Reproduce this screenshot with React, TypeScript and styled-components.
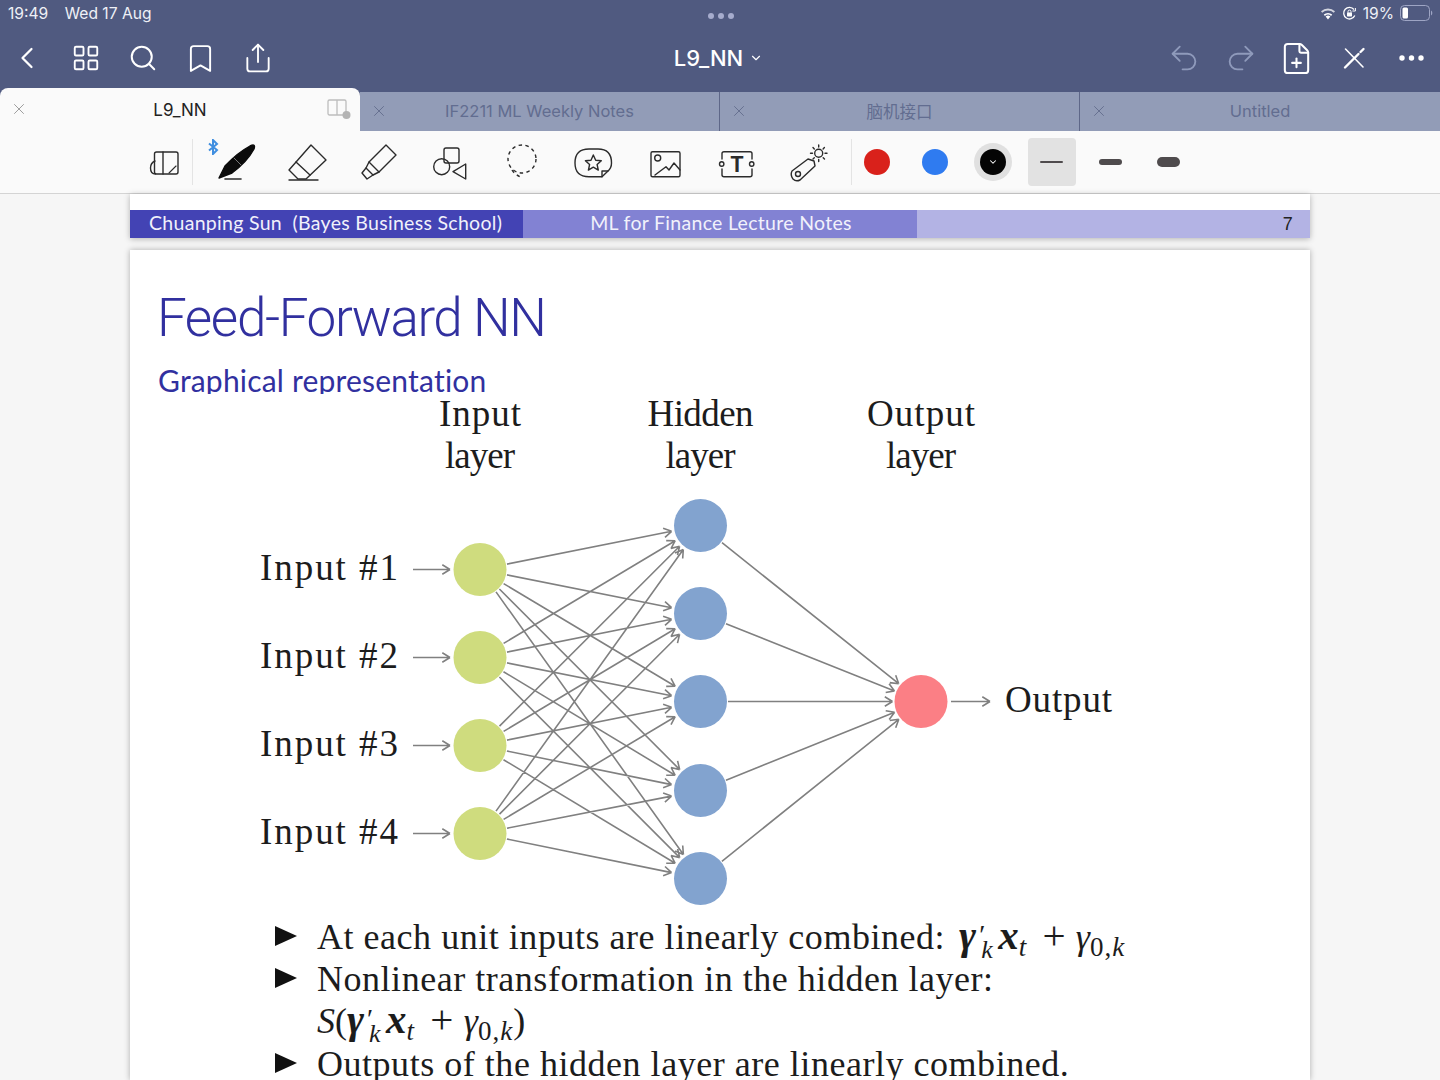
import { FC, ReactNode } from "react";
import styled, { createGlobalStyle } from "styled-components";
import {
  Bookmark,
  ChevronDown,
  ChevronLeft,
  FilePlus,
  LayoutGrid,
  Redo2,
  Search,
  Share,
  Undo2,
  X,
} from "lucide-react";

const GlobalStyle = createGlobalStyle`
  html, body {
    margin: 0;
    padding: 0;
    background: #f6f6f6;
  }
`;

const UI_FONT = `Inter, "Noto Sans CJK SC", "Liberation Sans", sans-serif`;
const SLIDE_SANS = `Lato, "Open Sans", sans-serif`;
const SLIDE_SERIF = `"Liberation Serif", serif`;

const Screen = styled.div`
  width: 1440px;
  height: 1080px;
  display: flex;
  flex-direction: column;
  overflow: hidden;
  font-family: ${UI_FONT};
`;

const Header = styled.header`
  background: #505a80;
  color: #fff;
`;

const StatusBar = styled.div`
  height: 28px;
  display: grid;
  grid-template-columns: 1fr auto 1fr;
  align-items: center;
  padding: 0 7px 2px 8px;
  box-sizing: border-box;
  font-size: 15.6px;
  color: #eef0f6;
`;

const StatusLeft = styled.div`
  display: flex;
  gap: 16.5px;
`;

const StatusRight = styled.div`
  display: flex;
  justify-content: flex-end;
  align-items: center;
  gap: 6px;
`;

const GrabDots = styled.div`
  display: flex;
  gap: 4px;
  margin-top: 5px;
`;

const GrabDot = styled.span`
  width: 6px;
  height: 6px;
  border-radius: 50%;
  background: #a6accd;
`;

const NavBar = styled.div`
  height: 60px;
  display: grid;
  grid-template-columns: 1fr auto 1fr;
  align-items: center;
`;

const NavGroup = styled.div<{ $end?: boolean }>`
  display: flex;
  justify-content: ${(p) => (p.$end ? "flex-end" : "flex-start")};
`;

const NavButton = styled.button<{ $muted?: boolean }>`
  width: 57.3px;
  height: 44px;
  padding: 0 0 0 ${(p) => (p.$muted ? "4px" : "0")};
  border: none;
  background: none;
  display: flex;
  align-items: center;
  justify-content: center;
  color: ${(p) => (p.$muted ? "#8f9abb" : "#fff")};
`;

const BackButton = styled(NavButton)`
  padding-right: 3px;
`;

const DocTitle = styled.div`
  display: flex;
  align-items: center;
  gap: 6px;
  font-size: 22px;
  font-weight: 500;
  color: #fff;
  padding-right: 3px;
`;

const TabRow = styled.div`
  height: 43px;
  display: flex;
  align-items: flex-end;
`;

const Tab = styled.div<{ $active?: boolean }>`
  position: relative;
  width: 360px;
  height: ${(p) => (p.$active ? "43px" : "39px")};
  box-sizing: border-box;
  display: flex;
  align-items: center;
  justify-content: center;
  font-size: ${(p) => (p.$active ? "17px" : "16.5px")};
  color: ${(p) => (p.$active ? "#222" : "#626d90")};
  background: ${(p) => (p.$active ? "#fafafa" : "#929cb7")};
  border-radius: ${(p) => (p.$active ? "8px 8px 0 0" : "0")};
  border-right: ${(p) => (p.$active ? "none" : "1px solid #5e6788")};
  padding-bottom: ${(p) => (p.$active ? "0" : "2px")};

  &:last-child {
    border-right: none;
  }
`;

const TabClose = styled.span<{ $active?: boolean }>`
  position: absolute;
  left: 10px;
  top: 50%;
  margin-top: -10px;
  display: flex;
  color: ${(p) => (p.$active ? "#8a8a8a" : "#5e6788")};
`;

const TabSplit = styled.span`
  position: absolute;
  right: 8px;
  top: 10px;
  display: flex;
`;

const Toolbar = styled.div`
  height: 62px;
  flex: none;
  display: flex;
  align-items: center;
  padding-left: 136px;
  background: #fafafa;
  border-bottom: 1px solid #d4d4d4;
`;

const ModeSlot = styled.div`
  width: 56px;
  display: flex;
  justify-content: center;
`;

const ToolDivider = styled.div<{ $left?: number; $right?: number }>`
  width: 1px;
  height: 46px;
  background: #e4e4e4;
  margin-left: ${(p) => p.$left ?? 0}px;
  margin-right: ${(p) => p.$right ?? 0}px;
`;

const ToolSlot = styled.div`
  position: relative;
  width: 71.5px;
  height: 48px;
  display: flex;
  align-items: center;
  justify-content: center;
`;

const PenBadge = styled.span`
  position: absolute;
  left: 7px;
  top: 1px;
  display: flex;
  color: #3f8ee0;
`;

const SwatchRow = styled.div`
  display: flex;
  gap: 8.4px;
`;

const SwatchSlot = styled.div<{ $selected?: boolean }>`
  width: 48px;
  height: 48px;
  margin: 0 1px;
  display: flex;
  align-items: center;
  justify-content: center;
  border-radius: 4px;
  background: ${(p) => (p.$selected ? "#e2e2e2" : "transparent")};
`;

const Swatch = styled.div<{ $color: string; $ring?: boolean }>`
  width: 26px;
  height: 26px;
  border-radius: 50%;
  background: ${(p) => p.$color};
  display: flex;
  align-items: center;
  justify-content: center;
  color: #fff;
  box-shadow: ${(p) => (p.$ring ? "0 0 0 6px #e0e0e0" : "none")};
`;

const StrokeBar = styled.div<{ $height: number }>`
  width: 23px;
  height: ${(p) => p.$height}px;
  border-radius: ${(p) => p.$height / 2}px;
  background: #4f4b4d;
`;

const Viewer = styled.main`
  flex: 1;
  min-height: 0;
  display: flex;
  flex-direction: column;
  align-items: center;
  gap: 12px;
  background: #f6f6f6;
`;

const PrevPage = styled.div`
  width: 1180px;
  height: 44px;
  flex: none;
  display: flex;
  align-items: flex-end;
  background: #fff;
  box-shadow: 0 1px 6px rgba(0, 0, 0, 0.28);
`;

const FooterCell = styled.div<{ $color: string; $center?: boolean; $dark?: boolean }>`
  flex: 1 1 0;
  min-width: 0;
  height: 28px;
  display: flex;
  align-items: center;
  justify-content: ${(p) => (p.$center ? "center" : "flex-start")};
  padding: 0 17px 3px 19px;
  box-sizing: border-box;
  background: ${(p) => p.$color};
  color: ${(p) => (p.$dark ? "#222" : "#f1f1fb")};
  font-family: ${SLIDE_SANS};
  font-size: 19.5px;
  letter-spacing: 0.3px;
  white-space: pre;
`;

const PageNumber = styled.span`
  margin-left: auto;
  padding-top: 3px;
  font-family: "Liberation Sans", sans-serif;
  font-size: 18px;
`;

const Slide = styled.section`
  width: 1180px;
  flex: 1;
  min-height: 0;
  overflow: hidden;
  background: #fff;
  box-shadow: 0 0 6px rgba(0, 0, 0, 0.3);
`;

const SlideTitle = styled.h1`
  margin: 36px 0 0 27px;
  font-family: Roboto, ${SLIDE_SANS};
  font-weight: 300;
  font-size: 53px;
  line-height: 64px;
  letter-spacing: -1.4px;
  color: #31309f;
`;

const SlideSubtitle = styled.h2`
  margin: 0 0 0 28px;
  height: 44px;
  overflow: hidden;
  font-family: ${SLIDE_SANS};
  font-weight: 400;
  font-size: 30px;
  line-height: 61px;
  letter-spacing: 0.2px;
  color: #31309f;
`;

const DiagramSvg = styled.svg`
  display: block;
  width: 1180px;
  height: 516px;
`;

const DiagramLabel = styled.text`
  font-family: ${SLIDE_SERIF};
  font-size: 37px;
  fill: #1c1c1c;
`;

const BulletList = styled.ul`
  list-style: none;
  margin: 6px 0 0;
  padding: 0 0 0 145px;
  font-family: ${SLIDE_SERIF};
  font-size: 36px;
  line-height: 42px;
  letter-spacing: 0.53px;
  color: #1c1c1c;
`;

const Bullet = styled.li`
  display: flex;
  align-items: flex-start;
`;

const BulletMark = styled.span`
  flex: none;
  width: 0;
  height: 0;
  margin: 10px 20px 0 0;
  border-left: 22px solid #111;
  border-top: 10px solid transparent;
  border-bottom: 10px solid transparent;
`;

const BulletLines = styled.div`
  white-space: nowrap;
`;

const MathLine = styled.div`
  height: 43px;
  line-height: 43px;
`;

const MathRun = styled.span<{ $flush?: boolean }>`
  letter-spacing: 0;
  margin-left: ${(p) => (p.$flush ? 0 : 14)}px;
`;

const MathVar = styled.i<{ $bold?: boolean }>`
  font-weight: ${(p) => (p.$bold ? 700 : 400)};
  font-size: ${(p) => (p.$bold ? "41px" : "36px")};
  line-height: 0;
`;

const MathSub = styled.sub`
  font-size: 27px;
  line-height: 0;
  letter-spacing: 1px;
  vertical-align: -7px;
`;

const MathPair = styled.span`
  display: inline-block;
  position: relative;
  width: 22px;
  height: 0;
`;

const MathPrime = styled.span`
  position: absolute;
  left: 3px;
  top: -21px;
  font-size: 28px;
  line-height: 14px;
`;

const MathLowK = styled.i`
  position: absolute;
  left: 5px;
  top: -6px;
  font-size: 26px;
  line-height: 14px;
`;

const MathOp = styled.span`
  font-size: 41px;
  line-height: 0;
  margin: 0 0 0 5px;
`;

// ---- icons -----------------------------------------------------------------

const WifiIcon: FC = () => (
  <svg width="16" height="13" viewBox="0 0 16 13" fill="#fff">
    <path d="M8 12.5 5.6 9.6a3.6 3.6 0 0 1 4.8 0Z" />
    <path d="M3.8 7.6a6.3 6.3 0 0 1 8.4 0l-1.1 1.3a4.6 4.6 0 0 0-6.2 0Z" />
    <path d="M1 4.3a10.4 10.4 0 0 1 14 0l-1.2 1.4a8.6 8.6 0 0 0-11.6 0Z" opacity=".75" />
  </svg>
);

const RotationLockIcon: FC = () => (
  <svg width="15" height="15" viewBox="0 0 15 15" fill="none" stroke="#fff" strokeWidth="1.3">
    <path d="M12.8 9.5A5.8 5.8 0 1 1 12 3.5" />
    <path d="M13.4 2v3h-3" strokeWidth="1" />
    <rect x="5" y="6.6" width="5" height="3.8" rx=".6" fill="#fff" stroke="none" />
    <path d="M6 6.8V5.6a1.5 1.5 0 0 1 3 0v1.2" strokeWidth="1" />
  </svg>
);

const BatteryIcon: FC = () => (
  <svg width="33" height="16" viewBox="0 0 33 16" fill="none">
    <rect x=".5" y=".5" width="29" height="15" rx="4" stroke="#9ea5c4" />
    <rect x="2.5" y="2.5" width="5.5" height="11" rx="1.5" fill="#fff" />
    <path d="M31 5.5a3 3 0 0 1 0 5Z" fill="#9ea5c4" />
  </svg>
);

const PenCrossIcon: FC = () => (
  <svg width="24" height="24" viewBox="0 0 24 24" fill="none" stroke="#fff" strokeLinecap="round">
    <path d="M3.5 3 21 21" strokeWidth="1.6" />
    <path d="M3 21.5 16.5 8" strokeWidth="2.4" />
    <path d="M18.5 6 21.5 3" strokeWidth="2.4" />
  </svg>
);

const MoreIcon: FC = () => (
  <svg width="25" height="6" viewBox="0 0 25 6" fill="#fff">
    <circle cx="3" cy="3" r="2.7" />
    <circle cx="12.5" cy="3" r="2.7" />
    <circle cx="22" cy="3" r="2.7" />
  </svg>
);

const SplitViewIcon: FC = () => (
  <svg width="25" height="22" viewBox="0 0 25 22" fill="none">
    <rect x="1" y="2" width="18" height="15" rx="1.5" stroke="#bdbdbd" strokeWidth="1.3" />
    <path d="M10 2v15" stroke="#bdbdbd" strokeWidth="1.3" />
    <circle cx="19.5" cy="17" r="4" fill="#b4b4b4" />
  </svg>
);

const ToolIcon: FC<{ children: ReactNode }> = ({ children }) => (
  <svg
    width="48"
    height="48"
    viewBox="0 0 48 48"
    fill="none"
    stroke="#2b2b2b"
    strokeWidth="1.4"
    strokeLinecap="round"
    strokeLinejoin="round"
  >
    {children}
  </svg>
);

const tools: ReactNode[] = [
  // pen
  <>
    <path d="M7 40 13 28Q25 15 38 8 44 5 42 11 35 24 20 35Z" fill="#0b0b0b" stroke="#0b0b0b" />
    <path d="M22 20 29 27" stroke="#777" strokeWidth="1" />
    <path d="M13 41H29" strokeWidth="1.6" />
  </>,
  // eraser
  <>
    <path d="M28 7 43 22 23 41H15L6 32Z" />
    <path d="M13 24 27 37" />
    <path d="M6 42H35" />
  </>,
  // highlighter
  <>
    <path d="M31 7 41 17 24 34 14 24Z" />
    <path d="M14 24 11 30 18 37 24 34" />
    <path d="M11 30 7 35 12 41 18 37" />
  </>,
  // shapes
  <>
    <rect x="18" y="10" width="15" height="15" rx="2" />
    <circle cx="15.7" cy="28.7" r="8" />
    <path d="M39.7 26V41L27 33.7Z" />
  </>,
  // lasso
  <>
    <circle cx="24" cy="21" r="14" strokeDasharray="3.5 3.4" strokeLinecap="butt" />
    <path d="M14 32Q17 37 25 40" strokeDasharray="3.5 3.4" strokeLinecap="butt" />
  </>,
  // sticker
  <>
    <path d="M20 11H29Q42.5 11 42.5 25 42.5 30 39 33L33 38.7H20Q6 38.7 6 25 6 11 20 11Z" />
    <path d="M24.3 17 26.7 22.2 32.3 22.8 28.1 26.5 29.3 32.1 24.3 29.2 19.4 32.1 20.6 26.5 16.4 22.8 22 22.2Z" />
    <path d="M33 38.7V33H39" />
  </>,
  // image
  <>
    <rect x="10" y="13.7" width="29" height="25" rx="1.5" />
    <circle cx="16.7" cy="20" r="3" />
    <path d="M14 37 25 28.7 28 32 33 25 39 32" />
  </>,
  // text box
  <>
    <path d="M10 21V15.5Q10 13.7 12 13.7H38Q40 13.7 40 15.5V21" />
    <path d="M10 31V37Q10 38.7 12 38.7H38Q40 38.7 40 37V31" />
    <circle cx="9.7" cy="26" r="2.2" />
    <circle cx="39.7" cy="26" r="2.2" />
    <text
      x="25"
      y="34"
      textAnchor="middle"
      fontFamily="Inter, sans-serif"
      fontWeight="700"
      fontSize="21"
      fill="#2b2b2b"
      stroke="none"
    >
      T
    </text>
  </>,
  // laser pointer
  <>
    <path d="M8 33 24 21 30 23 31 28 16 42Q12 44 9 41 6 37 8 33Z" />
    <circle cx="14" cy="36" r="2.5" />
    <circle cx="34.7" cy="15.3" r="4" />
    <path d="M34.7 7V9M34.7 21.5V23.5M26.5 15.3H28.5M41 15.3H43M29 9.6 30.3 11M39.2 19.8 40.5 21.1M40.4 9.6 39.1 11M29 21 30.3 19.7" />
  </>,
];

const ModeIcon: FC = () => (
  <svg width="32" height="32" viewBox="8 8 32 32" fill="none" stroke="#2b2b2b" strokeWidth="1.4" strokeLinejoin="round" strokeLinecap="round">
    <rect x="14.5" y="14" width="23.5" height="22" rx="2" />
    <path d="M23 14V36" />
    <path d="M15 23Q10.5 25 10.5 30 10.5 36 15.5 36" />
    <path d="M29 35 36 28" strokeWidth="1.1" />
  </svg>
);

// ---- network diagram -------------------------------------------------------

type Point = { x: number; y: number };

const RADIUS = 26.5;
const inputNodes: Point[] = [569, 657, 745, 833].map((y) => ({ x: 480, y }));
const hiddenNodes: Point[] = [525, 613, 701, 790, 878].map((y) => ({ x: 700.5, y }));
const outputNode: Point = { x: 921, y: 701 };

const arrowPath = (from: Point, to: Point, startGap: number, endGap: number) => {
  const dx = to.x - from.x;
  const dy = to.y - from.y;
  const len = Math.hypot(dx, dy);
  const ux = dx / len;
  const uy = dy / len;
  const sx = from.x + ux * startGap;
  const sy = from.y + uy * startGap;
  const ex = to.x - ux * endGap;
  const ey = to.y - uy * endGap;
  const head = (angle: number) => {
    const c = Math.cos(angle);
    const s = Math.sin(angle);
    const hx = ex - (ux * c - uy * s) * 9;
    const hy = ey - (ux * s + uy * c) * 9;
    return `M${hx.toFixed(1)} ${hy.toFixed(1)}L${ex.toFixed(1)} ${ey.toFixed(1)}`;
  };
  return `M${sx.toFixed(1)} ${sy.toFixed(1)}L${ex.toFixed(1)} ${ey.toFixed(1)}${head(0.55)}${head(-0.55)}`;
};

const edges: string[] = [
  ...inputNodes.flatMap((a) => hiddenNodes.map((b) => arrowPath(a, b, RADIUS + 1, RADIUS + 3))),
  ...hiddenNodes.map((a) => arrowPath(a, outputNode, RADIUS + 1, RADIUS + 2)),
  ...inputNodes.map((n) => arrowPath({ x: 413, y: n.y }, { x: 450, y: n.y }, 0, 0)),
  arrowPath({ x: 951, y: 701 }, { x: 990, y: 701 }, 0, 0),
];

const headers = [
  { x: 480, top: "Input", bottom: "layer", topWidth: 82, bottomWidth: 70 },
  { x: 700.5, top: "Hidden", bottom: "layer", topWidth: 106, bottomWidth: 70 },
  { x: 921, top: "Output", bottom: "layer", topWidth: 108, bottomWidth: 70 },
];

const Diagram: FC = () => (
  <DiagramSvg viewBox="130 393.5 1180 516">
    <path d={edges.join("")} fill="none" stroke="#808080" strokeWidth="1.6" />
    {inputNodes.map((n) => (
      <circle key={n.y} cx={n.x} cy={n.y} r={RADIUS} fill="#cfdc7e" />
    ))}
    {hiddenNodes.map((n) => (
      <circle key={n.y} cx={n.x} cy={n.y} r={RADIUS} fill="#82a3cf" />
    ))}
    <circle cx={outputNode.x} cy={outputNode.y} r={RADIUS} fill="#fb7f85" />
    {headers.map((h) => (
      <g key={h.top} textAnchor="middle">
        <DiagramLabel x={h.x} y={425} textLength={h.topWidth}>
          {h.top}
        </DiagramLabel>
        <DiagramLabel x={h.x} y={467} textLength={h.bottomWidth}>
          {h.bottom}
        </DiagramLabel>
      </g>
    ))}
    {inputNodes.map((n, i) => (
      <DiagramLabel key={n.y} x={260} y={n.y + 10} textLength={138}>
        Input #{i + 1}
      </DiagramLabel>
    ))}
    <DiagramLabel x={1005} y={711} textLength={107}>
      Output
    </DiagramLabel>
  </DiagramSvg>
);

const GammaK: FC = () => (
  <>
    <MathVar $bold>γ</MathVar>
    <MathPair>
      <MathPrime>′</MathPrime>
      <MathLowK>k</MathLowK>
    </MathPair>
    <MathVar $bold>x</MathVar>
    <MathSub>
      <i>t</i>
    </MathSub>
    <MathOp> + </MathOp>
    <MathVar>γ</MathVar>
    <MathSub>
      0,<i>k</i>
    </MathSub>
  </>
);

const tabs = ["IF2211 ML Weekly Notes", "脑机接口", "Untitled"];

export default function App() {
  return (
    <>
      <GlobalStyle />
      <Screen>
        <Header>
          <StatusBar>
            <StatusLeft>
              <span>19:49</span>
              <span>Wed 17 Aug</span>
            </StatusLeft>
            <GrabDots>
              <GrabDot />
              <GrabDot />
              <GrabDot />
            </GrabDots>
            <StatusRight>
              <WifiIcon />
              <RotationLockIcon />
              <span>19%</span>
              <BatteryIcon />
            </StatusRight>
          </StatusBar>
          <NavBar>
            <NavGroup>
              <BackButton>
                <ChevronLeft size={36} strokeWidth={1.5} />
              </BackButton>
              <NavButton>
                <LayoutGrid size={30} strokeWidth={1.5} />
              </NavButton>
              <NavButton>
                <Search size={30} strokeWidth={1.6} />
              </NavButton>
              <NavButton>
                <Bookmark size={33} strokeWidth={1.4} />
              </NavButton>
              <NavButton>
                <Share size={32} strokeWidth={1.4} />
              </NavButton>
            </NavGroup>
            <DocTitle>
              L9_NN
              <ChevronDown size={14} strokeWidth={2} />
            </DocTitle>
            <NavGroup $end>
              <NavButton $muted>
                <Undo2 size={34} strokeWidth={1.3} />
              </NavButton>
              <NavButton $muted>
                <Redo2 size={34} strokeWidth={1.3} />
              </NavButton>
              <NavButton>
                <FilePlus size={35} strokeWidth={1.4} />
              </NavButton>
              <NavButton>
                <PenCrossIcon />
              </NavButton>
              <NavButton>
                <MoreIcon />
              </NavButton>
            </NavGroup>
          </NavBar>
          <TabRow>
            <Tab $active>
              <TabClose $active>
                <X size={18} strokeWidth={1.1} />
              </TabClose>
              L9_NN
              <TabSplit>
                <SplitViewIcon />
              </TabSplit>
            </Tab>
            {tabs.map((name) => (
              <Tab key={name}>
                <TabClose>
                  <X size={18} strokeWidth={1.1} />
                </TabClose>
                {name}
              </Tab>
            ))}
          </TabRow>
        </Header>

        <Toolbar>
          <ModeSlot>
            <ModeIcon />
          </ModeSlot>
          <ToolDivider $right={7} />
          {tools.map((icon, i) => (
            <ToolSlot key={i}>
              {i === 0 && (
                <PenBadge>
                  <svg width="12" height="16" viewBox="0 0 12 16" fill="none" stroke="currentColor" strokeWidth="2">
                    <path d="M2 4.5 10 11 6 15V1l4 4-8 6.5" />
                  </svg>
                </PenBadge>
              )}
              <ToolIcon>{icon}</ToolIcon>
            </ToolSlot>
          ))}
          <ToolDivider $left={7} />
          <SwatchRow>
            <SwatchSlot>
              <Swatch $color="#d9211b" />
            </SwatchSlot>
            <SwatchSlot>
              <Swatch $color="#2f7bf0" />
            </SwatchSlot>
            <SwatchSlot>
              <Swatch $color="#050505" $ring>
                <ChevronDown size={10} strokeWidth={2.5} />
              </Swatch>
            </SwatchSlot>
            <SwatchSlot $selected>
              <StrokeBar $height={2} />
            </SwatchSlot>
            <SwatchSlot>
              <StrokeBar $height={6} />
            </SwatchSlot>
            <SwatchSlot>
              <StrokeBar $height={10} />
            </SwatchSlot>
          </SwatchRow>
        </Toolbar>

        <Viewer>
          <PrevPage>
            <FooterCell $color="#4343b4">{"Chuanping Sun  (Bayes Business School)"}</FooterCell>
            <FooterCell $color="#8282d3" $center>
              ML for Finance Lecture Notes
            </FooterCell>
            <FooterCell $color="#b3b3e4" $dark>
              <PageNumber>7</PageNumber>
            </FooterCell>
          </PrevPage>
          <Slide>
            <SlideTitle>Feed-Forward NN</SlideTitle>
            <SlideSubtitle>Graphical representation</SlideSubtitle>
            <Diagram />
            <BulletList>
              <Bullet>
                <BulletMark />
                <BulletLines>
                  At each unit inputs are linearly combined:
                  <MathRun>
                    <GammaK />
                  </MathRun>
                </BulletLines>
              </Bullet>
              <Bullet>
                <BulletMark />
                <BulletLines>
                  Nonlinear transformation in the hidden layer:
                  <MathLine>
                    <MathRun $flush>
                      <i>S</i>(<GammaK />)
                    </MathRun>
                  </MathLine>
                </BulletLines>
              </Bullet>
              <Bullet>
                <BulletMark />
                <BulletLines>Outputs of the hidden layer are linearly combined.</BulletLines>
              </Bullet>
            </BulletList>
          </Slide>
        </Viewer>
      </Screen>
    </>
  );
}
